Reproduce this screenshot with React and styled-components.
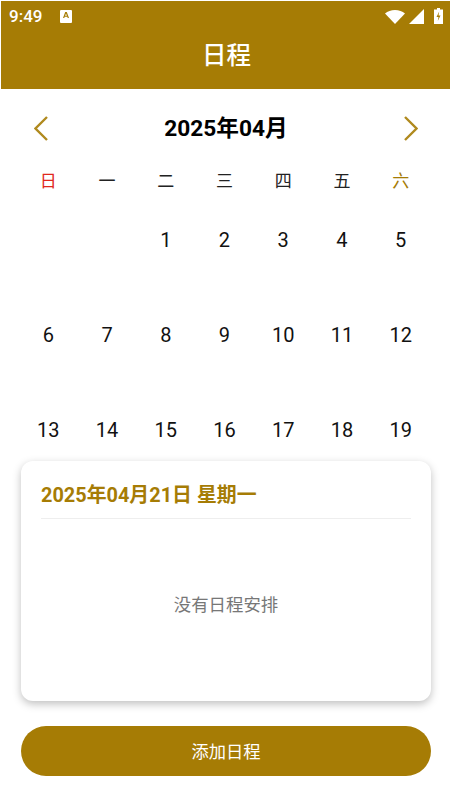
import React from 'react'
import styled, { createGlobalStyle } from 'styled-components'

const GOLD = '#a67c05'
const FONT = 'Roboto, "Noto Sans CJK SC", sans-serif'

const GlobalStyle = createGlobalStyle`
  html, body {
    margin: 0;
    padding: 0;
    background: #fff;
  }
  * {
    box-sizing: border-box;
  }
`

const Page = styled.div`
  width: 450px;
  height: 800px;
  display: flex;
  flex-direction: column;
  overflow: hidden;
  background: #fff;
  font-family: ${FONT};
`

const Header = styled.header`
  flex: none;
  height: 88px;
  margin-top: 1px;
  margin-left: 1px;
  background: ${GOLD};
  color: #fff;
`

const StatusBar = styled.div`
  height: 30px;
  padding: 0 7px 0 8px;
  display: flex;
  align-items: center;
  font-size: 17px;
  font-weight: 500;
`

const Clock = styled.span`
  width: 51px;
`

const StatusRight = styled.div`
  margin-left: auto;
  display: flex;
  align-items: center;
  gap: 4px;
`

const Title = styled.h1`
  margin: 0;
  padding-left: 2px;
  text-align: center;
  font-size: 24.5px;
  line-height: 50px;
  font-weight: 500;
`

const Calendar = styled.section`
  flex: 1;
  min-height: 0;
  overflow: hidden;
  padding: 0 20px 0 19px;
`

const MonthRow = styled.div`
  height: 76px;
  padding: 2px 12px 0 15px;
  display: flex;
  align-items: center;
  justify-content: space-between;
`

const MonthLabel = styled.div`
  margin-bottom: 3px;
  font-size: 22.7px;
  font-weight: 700;
  color: #000;
`

const Arrow = styled.svg`
  width: 14px;
  height: 25px;
  fill: none;
  stroke: #b08a1e;
  stroke-width: 2.4;
`

const Grid = styled.div`
  display: grid;
  grid-template-columns: repeat(7, 1fr);
`

const WeekDay = styled.div`
  height: 27.5px;
  padding-top: 1.5px;
  display: flex;
  align-items: center;
  justify-content: center;
  font-size: 17px;
  color: ${props => props.$color || '#222'};
`

const DayCell = styled.div`
  height: 95px;
  display: flex;
  align-items: center;
  justify-content: center;
  font-size: 20px;
  color: #111;
`

const ScheduleCard = styled.section`
  flex: none;
  height: 240px;
  margin: 0 19px 0 21px;
  padding: 0 20px;
  display: flex;
  flex-direction: column;
  background: #fff;
  border-radius: 12px;
  box-shadow: 0 3px 8px rgba(0, 0, 0, 0.25);
`

const CardDate = styled.div`
  height: 58px;
  padding-top: 8px;
  display: flex;
  align-items: center;
  border-bottom: 1px solid #eeeeee;
  font-size: 19.9px;
  font-weight: 700;
  color: ${GOLD};
`

const EmptyText = styled.div`
  flex: 1;
  padding-bottom: 14px;
  display: flex;
  align-items: center;
  justify-content: center;
  font-size: 17.4px;
  color: #777;
`

const AddButton = styled.button`
  flex: none;
  height: 50px;
  margin: 25px 19px 24px 21px;
  padding: 0 0 2px;
  border: 0;
  border-radius: 25px;
  background: ${GOLD};
  color: #fff;
  font-family: ${FONT};
  font-size: 17.3px;
`

const weekDays = [
  { label: '日', color: '#e0281c' },
  { label: '一' },
  { label: '二' },
  { label: '三' },
  { label: '四' },
  { label: '五' },
  { label: '六', color: '#a67c05' },
]

// rows below these are hidden behind the card in the screenshot
const days = ['', '', 1, 2, 3, 4, 5, 6, 7, 8, 9, 10, 11, 12, 13, 14, 15, 16, 17, 18, 19]

export default function App() {
  return (
    <>
      <GlobalStyle />
      <Page>
        <Header>
          <StatusBar>
            <Clock>9:49</Clock>
            <svg width="12" height="13" viewBox="0 0 12 13">
              <path fill="#fff" d="M0 1a1 1 0 0 1 1-1h10a1 1 0 0 1 1 1v11a1 1 0 0 1-1 1H1a1 1 0 0 1-1-1z" />
              <path fill={GOLD} d="M5.200 2h1.600L9 8H7.700l-.4-1.200H4.700L4.300 8H3zm.8 1.600-.9 2.200h1.800z" />
            </svg>
            <StatusRight>
              <svg width="20" height="15" viewBox="0 0 20 15">
                <path fill="#fff" d="M0 4.500C2.600 2.200 6 1 10 1s7.400 1.200 10 3.500L10 15z" />
              </svg>
              <svg width="15" height="15" viewBox="0 0 15 15" style={{ marginRight: 6 }}>
                <path fill="#fff" d="M15 0v15H0z" />
              </svg>
              <svg width="9" height="16" viewBox="0 0 9 16">
                <path fill="#fff" d="M3 0h3v1.500h3V16H0V1.500h3z" />
                <path fill={GOLD} d="M5.200 3.500 2.500 9h2L3.800 13l2.700-5.500h-2z" />
              </svg>
            </StatusRight>
          </StatusBar>
          <Title>日程</Title>
        </Header>
        <Calendar>
          <MonthRow>
            <Arrow viewBox="0 0 14 25">
              <path d="M13 1 1.500 12.500 13 24" />
            </Arrow>
            <MonthLabel>2025年04月</MonthLabel>
            <Arrow viewBox="0 0 14 25">
              <path d="M1 1l11.500 11.500L1 24" />
            </Arrow>
          </MonthRow>
          <Grid>
            {weekDays.map(day => (
              <WeekDay key={day.label} $color={day.color}>{day.label}</WeekDay>
            ))}
            {days.map((day, i) => (
              <DayCell key={i}>{day}</DayCell>
            ))}
          </Grid>
        </Calendar>
        <ScheduleCard>
          <CardDate>2025年04月21日 星期一</CardDate>
          <EmptyText>没有日程安排</EmptyText>
        </ScheduleCard>
        <AddButton>添加日程</AddButton>
      </Page>
    </>
  )
}
